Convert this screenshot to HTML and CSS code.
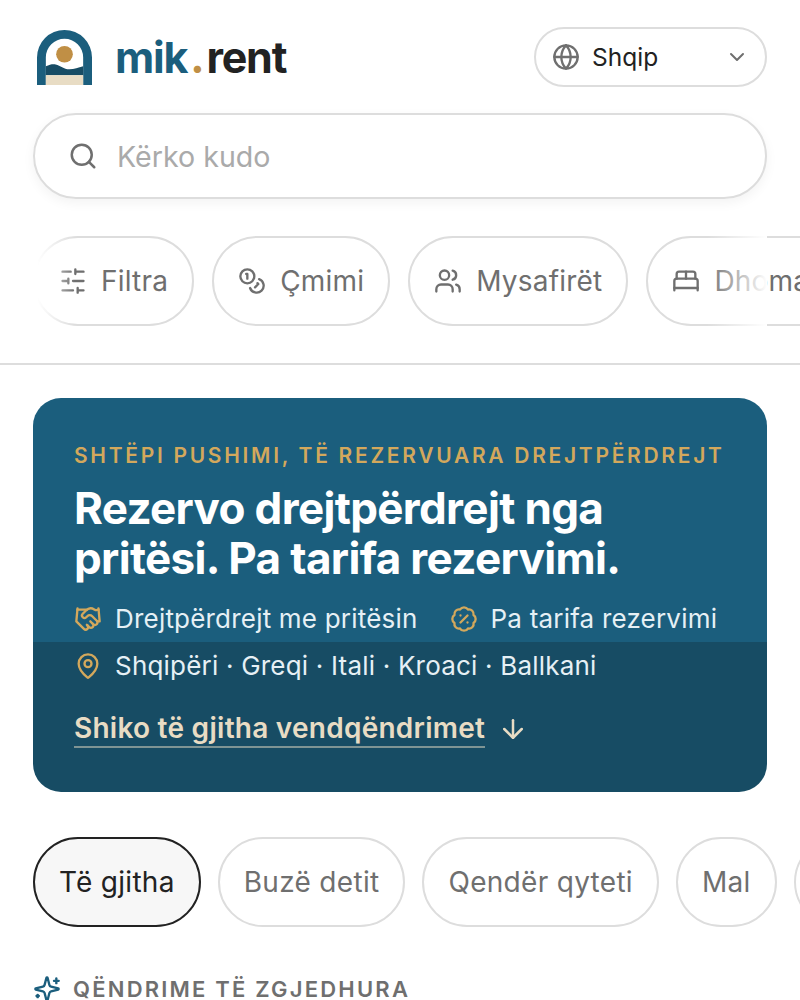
FILE: index.html
```html
<!DOCTYPE html>
<html lang="sq">
<head>
<meta charset="utf-8">
<title>mik.rent</title>
<link rel="stylesheet" href="styles.css">
</head>
<body>
<div class="page">
  <header class="top">
    <div class="brand">
      <svg class="logo" viewBox="0 0 56 56" aria-hidden="true">
        <path fill="#1b5e7d" d="M0 56V28a28 28 0 0 1 56 0v28H47V28a19 19 0 0 0-38 0v28z"/>
        <circle cx="28" cy="24.7" r="8.5" fill="#c08f45"/>
        <path fill="#174c64" d="M9 37C13 35 16 34.5 19 35 24 36 27 40 33 40 38 40 42 38.5 47 37V46H9z"/>
        <rect x="9" y="46" width="38" height="10" fill="#e8dcc4"/>
      </svg>
      <span class="wordmark"><span class="wm-a">mik</span><span class="wm-b">.</span><span class="wm-c">rent</span></span>
    </div>
    <button class="lang">
      <svg class="ic ic-globe" viewBox="0 0 24 24"><circle cx="12" cy="12" r="10"/><path d="M12 2a14.5 14.5 0 0 0 0 20 14.5 14.5 0 0 0 0-20"/><path d="M2 12h20"/></svg>
      <span class="lang-label">Shqip</span>
      <svg class="ic ic-chev" viewBox="0 0 24 24"><path d="m6 9 6 6 6-6"/></svg>
    </button>
  </header>

  <div class="search">
    <svg class="ic ic-search" viewBox="0 0 24 24"><circle cx="11" cy="11" r="8"/><path d="m21 21-4.3-4.3"/></svg>
    <span class="placeholder">Kërko kudo</span>
  </div>

  <div class="filters-wrap">
    <div class="filters">
      <button class="pill">
        <svg class="ic" viewBox="0 0 24 24"><path d="M21 4h-7M10 4H3M21 12h-9M8 12H3M21 20h-5M12 20H3M14 2v4M8 10v4M16 18v4"/></svg>
        Filtra
      </button>
      <button class="pill">
        <svg class="ic" viewBox="0 0 24 24"><circle cx="8" cy="8" r="6"/><path d="M18.09 10.37A6 6 0 1 1 10.34 18"/><path d="M7 6h1v4"/><path d="m16.71 13.88.7.71-2.82 2.82"/></svg>
        Çmimi
      </button>
      <button class="pill">
        <svg class="ic" viewBox="0 0 24 24"><path d="M16 21v-2a4 4 0 0 0-4-4H6a4 4 0 0 0-4 4v2"/><circle cx="9" cy="7" r="4"/><path d="M22 21v-2a4 4 0 0 0-3-3.87"/><path d="M16 3.13a4 4 0 0 1 0 7.75"/></svg>
        Mysafirët
      </button>
      <button class="pill">
        <svg class="ic" viewBox="0 0 24 24"><path d="M2 20v-8a2 2 0 0 1 2-2h16a2 2 0 0 1 2 2v8"/><path d="M4 10V6a2 2 0 0 1 2-2h12a2 2 0 0 1 2 2v4"/><path d="M12 4v6"/><path d="M2 18h20"/></svg>
        Dhomat
      </button>
    </div>
    <div class="fade fade-left"></div>
    <div class="fade fade-right"></div>
  </div>

  <main class="content">
    <section class="hero">
      <p class="eyebrow">SHTËPI PUSHIMI, TË REZERVUARA DREJTPËRDREJT</p>
      <h1 class="hero-title">Rezervo drejtpërdrejt nga pritësi. Pa tarifa rezervimi.</h1>
      <ul class="facts">
        <li class="fact">
          <svg class="ic ic-gold" viewBox="0 0 24 24"><path d="m11 17 2 2a1 1 0 1 0 3-3"/><path d="m14 14 2.5 2.5a1 1 0 1 0 3-3l-3.88-3.88a3 3 0 0 0-4.24 0l-.88.88a1 1 0 1 1-3-3l2.81-2.81a5.79 5.79 0 0 1 7.06-.87l.47.28a2 2 0 0 0 1.42.25L21 4"/><path d="m21 3 1 11h-2"/><path d="M3 3 2 14l6.5 6.5a1 1 0 1 0 3-3"/><path d="M3 4h8"/></svg>
          Drejtpërdrejt me pritësin
        </li>
        <li class="fact">
          <svg class="ic ic-gold" viewBox="0 0 24 24"><path d="M3.85 8.62a4 4 0 0 1 4.78-4.77 4 4 0 0 1 6.74 0 4 4 0 0 1 4.78 4.78 4 4 0 0 1 0 6.74 4 4 0 0 1-4.77 4.78 4 4 0 0 1-6.75 0 4 4 0 0 1-4.78-4.77 4 4 0 0 1 0-6.76Z"/><path d="m15 9-6 6"/><path d="M9 9h.01"/><path d="M15 15h.01"/></svg>
          Pa tarifa rezervimi
        </li>
        <li class="fact">
          <svg class="ic ic-gold" viewBox="0 0 24 24"><path d="M20 10c0 4.993-5.539 10.193-7.399 11.799a1 1 0 0 1-1.202 0C9.539 20.193 4 14.993 4 10a8 8 0 0 1 16 0"/><circle cx="12" cy="10" r="3"/></svg>
          Shqipëri · Greqi · Itali · Kroaci · Ballkani
        </li>
      </ul>
      <div class="hero-cta">
        <a class="hero-link" href="#">Shiko të gjitha vendqëndrimet</a>
        <svg class="ic ic-arrow" viewBox="0 0 24 24"><path d="M12 5v14"/><path d="m19 12-7 7-7-7"/></svg>
      </div>
    </section>

    <div class="chips">
      <button class="chip chip-active">Të gjitha</button>
      <button class="chip">Buzë detit</button>
      <button class="chip">Qendër qyteti</button>
      <button class="chip">Mal</button>
      <button class="chip chip-more" aria-label="Më shumë"></button>
    </div>

    <h2 class="section-title">
      <svg class="ic ic-spark" viewBox="0 0 24 24"><path d="M9.937 15.5A2 2 0 0 0 8.5 14.063l-6.135-1.582a.5.5 0 0 1 0-.962L8.5 9.936A2 2 0 0 0 9.937 8.5l1.582-6.135a.5.5 0 0 1 .963 0L14.063 8.5A2 2 0 0 0 15.5 9.937l6.135 1.581a.5.5 0 0 1 0 .964L15.5 14.063a2 2 0 0 0-1.437 1.437l-1.582 6.135a.5.5 0 0 1-.963 0z"/><path d="M20 3v4"/><path d="M22 5h-4"/><path d="M4 17v2"/><path d="M5 18H3"/></svg>
      QËNDRIME TË ZGJEDHURA
    </h2>
  </main>
</div>
</body>
</html>
```

FILE: styles.css
```css
* { box-sizing: border-box; }
html, body { margin: 0; padding: 0; background: #fff; }
body { font-family: Inter, "Liberation Sans", sans-serif; color: #222; height: 1000px; overflow: hidden; }
button { font-family: inherit; background: #fff; cursor: pointer; }
.page { width: 800px; }

.ic { fill: none; stroke: currentColor; stroke-width: 2; stroke-linecap: round; stroke-linejoin: round; flex: none; width: 28px; height: 28px; }

.top { display: flex; justify-content: space-between; align-items: center; padding: 27px 33px 0 37px; }
.brand { display: flex; align-items: center; gap: 23px; }
.logo { width: 55px; height: 55px; display: block; }
.wordmark { font-size: 43px; font-weight: 700; letter-spacing: -1.2px; line-height: 1; }
.wm-a { color: #1b5e7d; }
.wm-b { color: #c08f45; margin: 0 3px; }
.wm-c { color: #222; }

.lang { width: 233px; height: 60px; border: 2px solid #ddd; border-radius: 30px; display: flex; align-items: center; padding: 0 16px; color: #222; }
.ic-globe { color: #6f6f6f; }
.lang-label { font-size: 24.5px; margin-left: 12px; flex: 1; text-align: left; }
.ic-chev { color: #6f6f6f; width: 24px; height: 24px; }

.search { margin: 26px 33px 0; height: 86px; border: 2px solid #ddd; border-radius: 43px; display: flex; align-items: center; padding: 0 33px; gap: 19px; box-shadow: 0 4px 12px rgba(0,0,0,.05); }
.ic-search { color: #6f6f6f; width: 30px; height: 30px; }
.placeholder { font-size: 28.6px; color: #aaa; }

.filters-wrap { position: relative; margin-top: 37px; padding-bottom: 37px; border-bottom: 2px solid #ddd; overflow: hidden; }
.filters { display: flex; gap: 18px; padding-left: 33px; width: 1000px; }
.pill { height: 90px; border: 2px solid #ddd; border-radius: 45px; display: flex; align-items: center; gap: 14px; padding: 0 24px; font-size: 28px; letter-spacing: .2px; color: #6f6f6f; flex: none; }
.fade { position: absolute; top: 0; height: 90px; }
.fade-left { left: 33px; width: 42px; background: linear-gradient(to right, #fff 10%, rgba(255,255,255,0)); }
.fade-right { left: 707px; width: 60px; background: linear-gradient(to left, #fff, rgba(255,255,255,0)); }

.content { padding: 33px 0 0 33px; }
.hero { width: 734px; height: 394px; border-radius: 28px; padding: 45px 41px 0; color: #e6f0f5; background: linear-gradient(#1b5e7d 0 244px, #174c64 244px); }
.eyebrow { margin: 0; font-size: 21px; line-height: 26px; font-weight: 600; letter-spacing: 2.7px; color: #d3a85c; white-space: nowrap; }
.hero-title { margin: 14px 0 0; color: #fff; font-size: 44px; line-height: 50px; font-weight: 700; letter-spacing: -.65px; width: 640px; }
.facts { list-style: none; margin: 20px 0 0; padding: 0; display: flex; flex-wrap: wrap; column-gap: 32px; row-gap: 15px; }
.fact { display: flex; align-items: center; gap: 13px; font-size: 26px; letter-spacing: .2px; line-height: 32px; white-space: nowrap; }
.ic-gold { color: #d3a85c; }
.hero-cta { display: flex; align-items: center; gap: 13px; margin-top: 28px; color: #e8dcc4; }
.hero-link { color: inherit; text-decoration: none; font-size: 28px; letter-spacing: .25px; line-height: 36px; font-weight: 600; border-bottom: 2px solid rgba(232,220,196,.5); }
.ic-arrow { width: 30px; height: 30px; }

.chips { display: flex; gap: 17px; margin-top: 45px; width: 900px; }
.chip { height: 90px; border: 2px solid #ddd; border-radius: 45px; padding: 0 24px; font-size: 28px; letter-spacing: .3px; color: #6f6f6f; flex: none; }
.chip-more { width: 120px; }
.chip-active { border-color: #222; color: #222; background: #f7f7f7; }

.section-title { display: flex; align-items: center; gap: 12px; margin: 48px 0 0; font-size: 22px; line-height: 28px; font-weight: 600; letter-spacing: 2.2px; color: #6f6f6f; white-space: nowrap; }
.ic-spark { color: #1b5e7d; }
```
